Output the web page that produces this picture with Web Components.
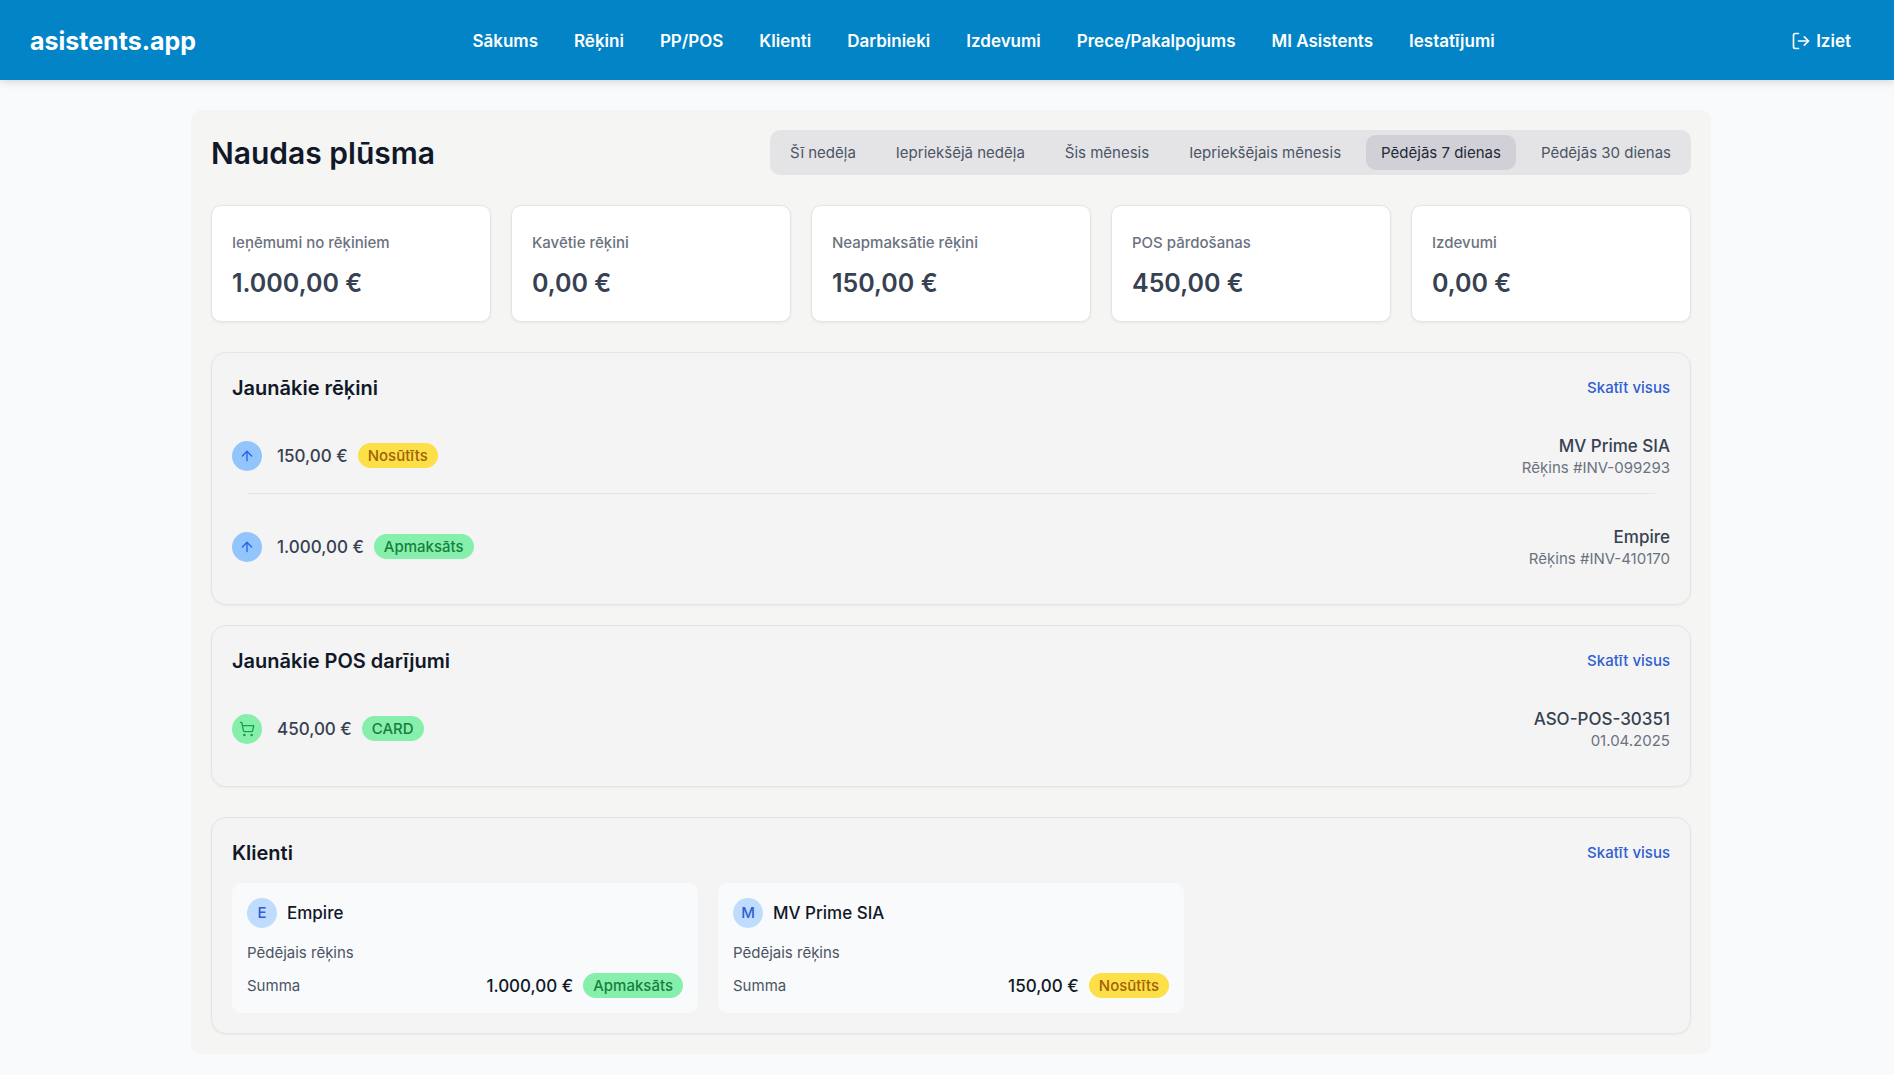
<!DOCTYPE html>
<html lang="lv">
<head>
<meta charset="utf-8">
<title>asistents.app</title>
<style>
	body {
		margin: 0;
		background: #f9fafb;
		font-family: Inter, "Liberation Sans", sans-serif;
		font-size: 17px;
		color: #374151;
	}
	main {
		padding: 30px 0 22px 8px;
	}
</style>
</head>
<body>
<app-header></app-header>
<main>
	<cash-flow></cash-flow>
</main>

<script>
const icons = {
	logout: `<path d="M9 21H5a2 2 0 0 1-2-2V5a2 2 0 0 1 2-2h4"/><path d="M16 17l5-5-5-5"/><path d="M21 12H9"/>`,
	arrow: `<path d="M12 19V5"/><path d="M5 12l7-7 7 7"/>`,
	cart: `<circle cx="8" cy="21" r="1"/><circle cx="19" cy="21" r="1"/><path d="M2.05 2.05h2l2.66 12.42a2 2 0 0 0 2 1.58h9.78a2 2 0 0 0 1.95-1.57l1.65-7.43H5.12"/>`
};

function icon(name, size) {
	return `<svg width="${size}" height="${size}" viewBox="0 0 24 24" fill="none" stroke="currentColor" stroke-width="2" stroke-linecap="round" stroke-linejoin="round" aria-hidden="true">${icons[name]}</svg>`;
}

class AppHeader extends HTMLElement {

	constructor() {
		super();
		const links = ["Sākums", "Rēķini", "PP/POS", "Klienti", "Darbinieki", "Izdevumi", "Prece/Pakalpojums", "MI Asistents", "Iestatījumi"];
		this.attachShadow({mode: 'open'}).innerHTML = `
			<style>
				:host {
					display: flex;
					align-items: center;
					justify-content: space-between;
					height: 78px;
					padding: 2px 23px 0 30px;
					background: #0284c7;
					box-shadow: 0 2px 8px rgba(0, 0, 0, 0.15);
				}
				a {
					color: #fff;
					text-decoration: none;
				}
				.logo {
					font-size: 25px;
					font-weight: 700;
				}
				nav {
					display: flex;
					gap: 36px;
					font-weight: 600;
					line-height: 24px;
				}
				button {
					display: flex;
					align-items: center;
					gap: 5px;
					padding: 10px 20px;
					border: 0;
					background: none;
					color: #fff;
					font: inherit;
					font-weight: 600;
					line-height: 24px;
				}
			</style>
			<a class="logo" href="#">asistents.app</a>
			<nav>${links.map(text => `<a href="#">${text}</a>`).join("")}</nav>
			<button type="button">${icon("logout", 20)}Iziet</button>
		`;
	}
}

class PeriodTabs extends HTMLElement {

	constructor() {
		super();
		this.periods = ["Šī nedēļa", "Iepriekšējā nedēļa", "Šis mēnesis", "Iepriekšējais mēnesis", "Pēdējās 7 dienas", "Pēdējās 30 dienas"];
		this.attachShadow({mode: 'open'}).innerHTML = `
			<style>
				:host {
					display: flex;
					gap: 10px;
					padding: 5px;
					border-radius: 10px;
					background: #e4e4e7;
				}
				button {
					height: 35px;
					padding: 0 15px;
					border: 0;
					border-radius: 10px;
					background: none;
					color: #4b5563;
					font: inherit;
					font-size: 15px;
				}
				button[aria-pressed="true"] {
					background: #d0d0d6;
					color: #1f2937;
				}
			</style>
			${this.periods.map(text => `<button type="button">${text}</button>`).join("")}
		`;
	}

	connectedCallback() {
		this.buttons = this.shadowRoot.querySelectorAll("button");
		this.buttons.forEach((button, i) => button.addEventListener("click", () => this.select(i)));
		this.select(4);
	}

	select(index) {
		this.buttons.forEach((button, i) => button.setAttribute("aria-pressed", i === index));
	}
}

class StatCard extends HTMLElement {

	constructor() {
		super();
		this.attachShadow({mode: 'open'}).innerHTML = `
			<style>
				:host {
					display: flex;
					flex-direction: column;
					gap: 10px;
					padding: 25px 20px 20px;
					border: 1px solid #e5e5e5;
					border-radius: 10px;
					background: #fff;
					box-shadow: 0 1px 3px rgba(0, 0, 0, 0.06);
				}
				.label {
					color: #6b7280;
					font-size: 15px;
					font-weight: 500;
					line-height: 24px;
				}
				.value {
					font-size: 25px;
					font-weight: 600;
					line-height: 36px;
				}
			</style>
			<span class="label"><slot name="label"></slot></span>
			<span class="value"><slot></slot></span>
		`;
	}
}

class StatusBadge extends HTMLElement {

	constructor() {
		super();
		this.attachShadow({mode: 'open'}).innerHTML = `
			<style>
				:host {
					display: block;
					padding: 0 10px;
					border-radius: 13px;
					background: #86efac;
					color: #15803d;
					font-size: 15px;
					font-weight: 500;
					line-height: 25px;
				}
				:host([type="sent"]) {
					background: #fde047;
					color: #a16207;
				}
			</style>
			<slot></slot>
		`;
	}
}

class PanelSection extends HTMLElement {

	constructor() {
		super();
		this.attachShadow({mode: 'open'}).innerHTML = `
			<style>
				:host {
					display: flex;
					flex-direction: column;
					gap: 15px;
					padding: 20px;
					border: 1px solid #e5e5e5;
					border-radius: 15px;
					background: #f4f4f4;
					box-shadow: 0 1px 3px rgba(0, 0, 0, 0.05);
				}
				header {
					display: flex;
					align-items: center;
					justify-content: space-between;
				}
				h2 {
					margin: 0;
					color: #111827;
					font-size: 20px;
					font-weight: 600;
					line-height: 30px;
				}
				a {
					color: #2f5fd0;
					font-size: 15px;
					font-weight: 500;
					line-height: 20px;
					text-decoration: none;
				}
			</style>
			<header>
				<h2><slot name="title"></slot></h2>
				<a href="#">Skatīt visus</a>
			</header>
			<slot></slot>
		`;
	}
}

class TransactionRow extends HTMLElement {

	constructor() {
		super();
		const name = this.getAttribute("icon");
		this.attachShadow({mode: 'open'}).innerHTML = `
			<style>
				:host {
					display: block;
				}
				.row {
					display: flex;
					align-items: center;
					height: 45px;
					padding: 15px 0;
				}
				.icon {
					display: flex;
					align-items: center;
					justify-content: center;
					width: 30px;
					height: 30px;
					margin-right: 15px;
					border-radius: 50%;
					background: #93c5fd;
					color: #2563eb;
				}
				.icon.cart {
					background: #86efac;
					color: #16a34a;
				}
				.amount {
					margin-right: 10px;
				}
				.info {
					display: flex;
					flex-direction: column;
					align-items: flex-end;
					margin-left: auto;
				}
				.amount, .name {
					font-weight: 500;
					line-height: 24px;
				}
				.detail {
					color: #6b7280;
					font-size: 15px;
					line-height: 20px;
				}
				hr {
					display: none;
					height: 1px;
					margin: 0 15px;
					border: 0;
					background: #e5e5e5;
				}
				:host([divided]) hr {
					display: block;
				}
			</style>
			<div class="row">
				<span class="icon ${name}">${icon(name, 16)}</span>
				<span class="amount"><slot name="amount"></slot></span>
				<slot></slot>
				<div class="info">
					<span class="name"><slot name="name"></slot></span>
					<span class="detail"><slot name="detail"></slot></span>
				</div>
			</div>
			<hr>
		`;
	}
}

class ClientCard extends HTMLElement {

	constructor() {
		super();
		const name = this.getAttribute("name");
		this.attachShadow({mode: 'open'}).innerHTML = `
			<style>
				:host {
					display: block;
					padding: 15px;
					border-radius: 10px;
					background: #f9fafb;
				}
				.head, .sum {
					display: flex;
					align-items: center;
					gap: 10px;
				}
				.avatar {
					width: 30px;
					border-radius: 50%;
					background: #bfdbfe;
					color: #2f5fd0;
					font-size: 15px;
					font-weight: 500;
					line-height: 30px;
					text-align: center;
				}
				.name, .amount {
					color: #111827;
					font-weight: 500;
					line-height: 24px;
				}
				.label {
					color: #4b5563;
					font-size: 15px;
					line-height: 20px;
				}
				.last {
					margin: 15px 0 10px;
				}
				.amount {
					margin-left: auto;
				}
			</style>
			<div class="head">
				<span class="avatar">${name[0]}</span>
				<span class="name">${name}</span>
			</div>
			<div class="label last">Pēdējais rēķins</div>
			<div class="sum">
				<span class="label">Summa</span>
				<span class="amount"><slot name="amount"></slot></span>
				<slot></slot>
			</div>
		`;
	}
}

class CashFlow extends HTMLElement {

	constructor() {
		super();
		this.attachShadow({mode: 'open'}).innerHTML = `
			<style>
				:host {
					display: flex;
					flex-direction: column;
					gap: 30px;
					box-sizing: border-box;
					max-width: 1520px;
					margin: 0 auto;
					padding: 20px;
					border-radius: 10px;
					background: #f5f5f4;
				}
				.top {
					display: flex;
					align-items: center;
					justify-content: space-between;
				}
				h1 {
					margin: 0;
					color: #111827;
					font-size: 30px;
					font-weight: 600;
				}
				.stats {
					display: grid;
					grid-template-columns: repeat(5, 1fr);
					gap: 20px;
				}
				.latest {
					display: grid;
					gap: 20px;
				}
				.rows {
					display: grid;
					gap: 15px;
				}
				.clients {
					display: grid;
					grid-template-columns: repeat(3, 1fr);
					gap: 20px;
				}
			</style>
			<div class="top">
				<h1>Naudas plūsma</h1>
				<period-tabs></period-tabs>
			</div>
			<div class="stats">
				<stat-card><span slot="label">Ieņēmumi no rēķiniem</span>1.000,00 €</stat-card>
				<stat-card><span slot="label">Kavētie rēķini</span>0,00 €</stat-card>
				<stat-card><span slot="label">Neapmaksātie rēķini</span>150,00 €</stat-card>
				<stat-card><span slot="label">POS pārdošanas</span>450,00 €</stat-card>
				<stat-card><span slot="label">Izdevumi</span>0,00 €</stat-card>
			</div>
			<div class="latest">
				<panel-section>
					<span slot="title">Jaunākie rēķini</span>
					<div class="rows">
						<transaction-row icon="arrow" divided>
							<span slot="amount">150,00 €</span>
							<status-badge type="sent">Nosūtīts</status-badge>
							<span slot="name">MV Prime SIA</span>
							<span slot="detail">Rēķins #INV-099293</span>
						</transaction-row>
						<transaction-row icon="arrow">
							<span slot="amount">1.000,00 €</span>
							<status-badge>Apmaksāts</status-badge>
							<span slot="name">Empire</span>
							<span slot="detail">Rēķins #INV-410170</span>
						</transaction-row>
					</div>
				</panel-section>
				<panel-section>
					<span slot="title">Jaunākie POS darījumi</span>
					<transaction-row icon="cart">
						<span slot="amount">450,00 €</span>
						<status-badge>CARD</status-badge>
						<span slot="name">ASO-POS-30351</span>
						<span slot="detail">01.04.2025</span>
					</transaction-row>
				</panel-section>
			</div>
			<panel-section>
				<span slot="title">Klienti</span>
				<div class="clients">
					<client-card name="Empire">
						<span slot="amount">1.000,00 €</span>
						<status-badge>Apmaksāts</status-badge>
					</client-card>
					<client-card name="MV Prime SIA">
						<span slot="amount">150,00 €</span>
						<status-badge type="sent">Nosūtīts</status-badge>
					</client-card>
				</div>
			</panel-section>
		`;
	}
}

window.customElements.define('app-header', AppHeader);
window.customElements.define('period-tabs', PeriodTabs);
window.customElements.define('stat-card', StatCard);
window.customElements.define('status-badge', StatusBadge);
window.customElements.define('panel-section', PanelSection);
window.customElements.define('transaction-row', TransactionRow);
window.customElements.define('client-card', ClientCard);
window.customElements.define('cash-flow', CashFlow);
</script>
</body>
</html>
